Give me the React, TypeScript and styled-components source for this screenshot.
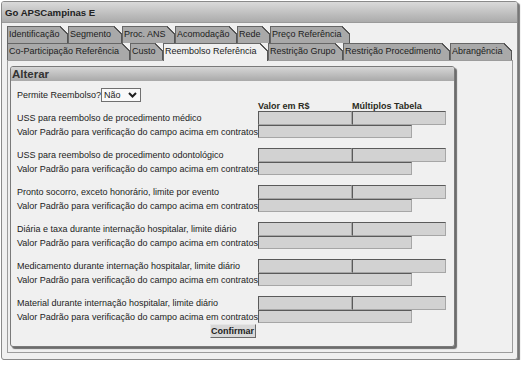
import styled, { createGlobalStyle } from 'styled-components';

type TabItem = { label: string; width: number; active?: boolean };

const TOP_TABS: TabItem[] = [
  { label: 'Identificação', width: 61 },
  { label: 'Segmento', width: 54 },
  { label: 'Proc. ANS', width: 53 },
  { label: 'Acomodação', width: 62 },
  { label: 'Rede', width: 33 },
  { label: 'Preço Referência', width: 80 },
];

const BOTTOM_TABS: TabItem[] = [
  { label: 'Co-Participação Referência', width: 123 },
  { label: 'Custo', width: 33 },
  { label: 'Reembolso Referência', width: 105, active: true },
  { label: 'Restrição Grupo', width: 75 },
  { label: 'Restrição Procedimento', width: 107 },
  { label: 'Abrangência', width: 62 },
];

const FIELDS = [
  'USS para reembolso de procedimento médico',
  'USS para reembolso de procedimento odontológico',
  'Pronto socorro, exceto honorário, limite por evento',
  'Diária e taxa durante internação hospitalar, limite diário',
  'Medicamento durante internação hospitalar, limite diário',
  'Material durante internação hospitalar, limite diário',
];

const DEFAULT_HINT = 'Valor Padrão para verificação do campo acima em contratos';

const ChevronDown = () => (
  <svg width="9" height="6" viewBox="0 0 9 6">
    <polyline points="1,1 4.5,4.5 8,1" fill="none" stroke="#1e1e1e" strokeWidth="2" />
  </svg>
);

const App = () => (
  <>
    <GlobalStyle />
    <Window>
      <TitleBar>Go APSCampinas E</TitleBar>
      <WindowBody>
        <TabRow>
          {TOP_TABS.map((tab) => (
            <Tab key={tab.label} $width={tab.width}>
              {tab.label}
            </Tab>
          ))}
        </TabRow>
        <TabRow>
          {BOTTOM_TABS.map((tab) => (
            <Tab key={tab.label} $width={tab.width} $active={tab.active}>
              {tab.label}
            </Tab>
          ))}
        </TabRow>
        <TabPanel>
          <Panel>
            <PanelHeader>Alterar</PanelHeader>
            <PanelBody>
              <PermiteRow>
                <span>Permite Reembolso?</span>
                <SelectWrap>
                  <Select defaultValue="N">
                    <option value="N">Não</option>
                    <option value="S">Sim</option>
                  </Select>
                  <SelectArrow>
                    <ChevronDown />
                  </SelectArrow>
                </SelectWrap>
              </PermiteRow>
              <ColumnHeader>
                <span />
                <span>Valor em R$</span>
                <span>Múltiplos Tabela</span>
              </ColumnHeader>
              {FIELDS.map((label) => (
                <FieldGroup key={label}>
                  <ValueRow>
                    <Label>{label}</Label>
                    <Field $width={94} $height={14} />
                    <Field $width={94} $height={14} />
                  </ValueRow>
                  <DefaultRow>
                    <Label>{DEFAULT_HINT}</Label>
                    <Field $width={154} $height={13} />
                  </DefaultRow>
                </FieldGroup>
              ))}
              <ButtonRow>
                <ConfirmButton type="button">Confirmar</ConfirmButton>
              </ButtonRow>
            </PanelBody>
          </Panel>
        </TabPanel>
      </WindowBody>
    </Window>
  </>
);

const GlobalStyle = createGlobalStyle`
  html, body {
    margin: 0;
    padding: 0;
    background: #ffffff;
  }
  body {
    font-family: 'Liberation Sans', Arial, sans-serif;
    font-size: 9px;
    color: #222;
  }
`;

const Window = styled.div`
  margin: 1px 0 0 1px;
  width: 517px;
  height: 359px;
  box-sizing: border-box;
  border: 1px solid #8a8a8a;
  border-radius: 3px;
  background: #f0f0f0;
  box-shadow: 2px 2px 1px #777;
  display: flex;
  flex-direction: column;
  overflow: hidden;
`;

const TitleBar = styled.div`
  flex-shrink: 0;
  height: 20px;
  padding-left: 3px;
  display: flex;
  align-items: center;
  background: linear-gradient(#dadada, #ababab);
  border-bottom: 1px solid #9a9a9a;
  font-size: 9.6px;
  font-weight: bold;
  color: #222;
`;

const WindowBody = styled.div`
  flex: 1;
  min-height: 0;
  display: flex;
  flex-direction: column;
  padding: 3px 4px 6px 5px;
`;

const TabRow = styled.div`
  flex-shrink: 0;
  display: flex;
  height: 17px;
`;

const Tab = styled.div<{ $width: number; $active?: boolean }>`
  position: relative;
  z-index: ${({ $active }) => ($active ? 2 : 1)};
  width: ${({ $width }) => $width}px;
  height: ${({ $active }) => ($active ? 18 : 17)}px;
  box-sizing: border-box;
  padding-left: 2px;
  line-height: 17px;
  white-space: nowrap;
  overflow: hidden;
  color: #1c1c1c;
  background:
    linear-gradient(#666, #666) left top / 1px 100% no-repeat,
    linear-gradient(#666, #666) left top / calc(100% - 8px) 1px no-repeat,
    linear-gradient(#555, #555) right bottom / 1px calc(100% - 8px) no-repeat,
    linear-gradient(
      225deg,
      transparent 5.3px,
      #555 5.3px,
      #555 6.4px,
      ${({ $active }) => ($active ? '#f0f0f0' : '#a9a9a9')} 6.4px
    );
`;

const TabPanel = styled.div`
  flex: 1;
  border: 1px solid #9c9c9c;
  background: #f0f0f0;
  padding: 5px 0 0 2px;
`;

const Panel = styled.div`
  width: 445px;
  box-sizing: border-box;
  border: 1px solid #7a7a7a;
  border-radius: 3px;
  background: #f0f0f0;
  box-shadow: 2px 2px 1px #6c6c6c;
  overflow: hidden;
`;

const PanelHeader = styled.div`
  height: 14px;
  line-height: 14px;
  padding-left: 1px;
  background: linear-gradient(#d6d6d6, #a9a9a9);
  font-size: 11.5px;
  font-weight: bold;
  color: #333;
`;

const PanelBody = styled.div`
  display: flex;
  flex-direction: column;
  padding: 7px 6px 8px 6px;
`;

const PermiteRow = styled.div`
  display: flex;
  align-items: center;
  height: 13px;
`;

const SelectWrap = styled.div`
  position: relative;
  display: inline-flex;
`;

const Select = styled.select`
  appearance: none;
  width: 40px;
  height: 14px;
  margin: 0;
  padding: 0 0 0 2px;
  border: 1px solid #707070;
  border-radius: 0;
  background: #f9f9f9;
  font-family: 'Liberation Sans', Arial, sans-serif;
  font-size: 9px;
  color: #222;
`;

const SelectArrow = styled.span`
  position: absolute;
  right: 4px;
  top: 4px;
  display: flex;
  pointer-events: none;
`;

const ColumnHeader = styled.div`
  display: grid;
  grid-template-columns: 241px 94px 94px;
  height: 10px;
  line-height: 11px;
  font-weight: bold;
  color: #2a2a22;
`;

const FieldGroup = styled.div`
  display: flex;
  flex-direction: column;

  & + & {
    margin-top: 10px;
  }
`;

const ValueRow = styled.div`
  display: grid;
  grid-template-columns: 241px 94px 94px;
  align-items: center;
  height: 14px;
`;

const DefaultRow = styled.div`
  display: grid;
  grid-template-columns: 241px 154px;
  align-items: center;
  height: 13px;
`;

const Label = styled.span`
  white-space: nowrap;
`;

const Field = styled.input<{ $width: number; $height: number }>`
  width: ${({ $width }) => $width}px;
  height: ${({ $height }) => $height}px;
  box-sizing: border-box;
  margin: 0;
  padding: 0 2px;
  background: #d2d2d2;
  border: 1px solid;
  border-color: #5a5a5a #a6a6a6 #a6a6a6 #5a5a5a;
  font-family: 'Liberation Sans', Arial, sans-serif;
  font-size: 9px;
`;

const ButtonRow = styled.div`
  display: flex;
  justify-content: center;
  margin-top: 1px;
`;

const ConfirmButton = styled.button`
  width: 46px;
  height: 14px;
  padding: 0;
  background: #d8d8d8;
  border: 1px solid;
  border-color: #e6e6e6 #6a6a6a #6a6a6a #e6e6e6;
  font-family: 'Liberation Sans', Arial, sans-serif;
  font-size: 9px;
  font-weight: bold;
  color: #222;
`;

export default App;
